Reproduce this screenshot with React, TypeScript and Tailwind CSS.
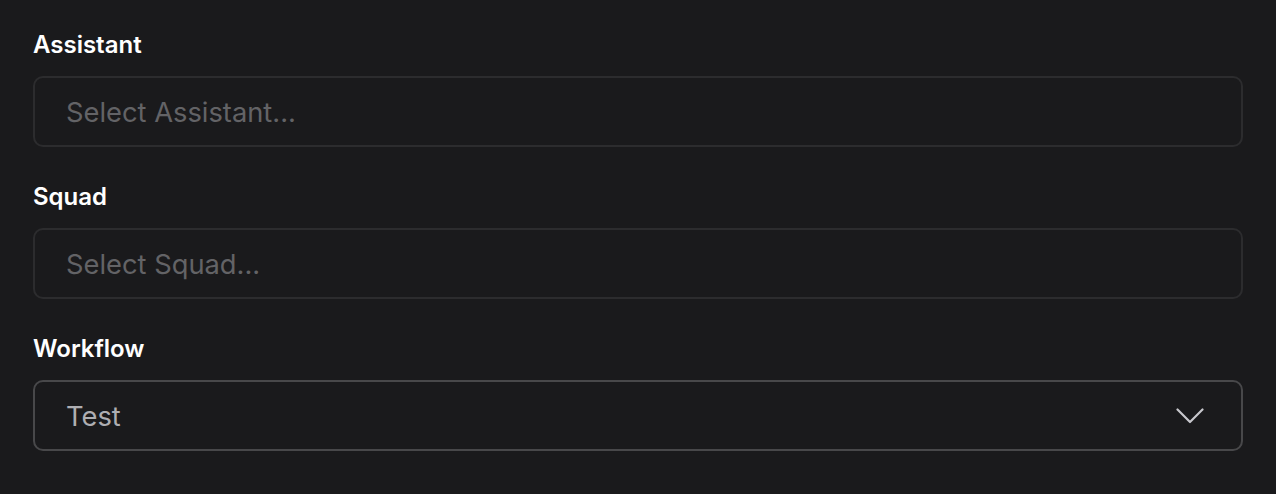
import React from 'react';

const fields = [
  { label: 'Assistant', value: 'Select Assistant...', placeholder: true },
  { label: 'Squad', value: 'Select Squad...', placeholder: true },
  { label: 'Workflow', value: 'Test', placeholder: false },
];

const App: React.FC = () => {
  return (
    <div
      className="min-h-[494px] w-full bg-[#1a1a1c] px-[33px] pt-[29px]"
      style={{ fontFamily: 'Inter, "Noto Sans", sans-serif' }}
    >
      <div className="flex flex-col gap-[34px]">
        {fields.map((f) => (
          <div key={f.label} className="flex flex-col gap-[15px]">
            <label className="text-[24px] leading-[32px] font-semibold text-white">{f.label}</label>
            {f.placeholder ? (
              <div className="flex h-[71px] items-center rounded-[10px] border-2 border-[#2c2c2e] bg-[#1a1a1c] px-[31px]">
                <span className="pt-[4px] text-[27.3px] text-[#636366]">{f.value}</span>
              </div>
            ) : (
              <div className="flex h-[71px] items-center justify-between rounded-[10px] border-2 border-[#48484a] bg-[#1a1a1c] pl-[31px] pr-[37px]">
                <span className="pt-[4px] text-[27.3px] text-[#aeaeb2]">{f.value}</span>
                <svg width="28" height="16" viewBox="0 0 28 16" fill="none">
                  <path d="M1.5 1.5 L14 14 L26.5 1.5" stroke="#c7c7cc" strokeWidth="2.2" strokeLinecap="round" strokeLinejoin="round" />
                </svg>
              </div>
            )}
          </div>
        ))}
      </div>
    </div>
  );
};

export default App;
